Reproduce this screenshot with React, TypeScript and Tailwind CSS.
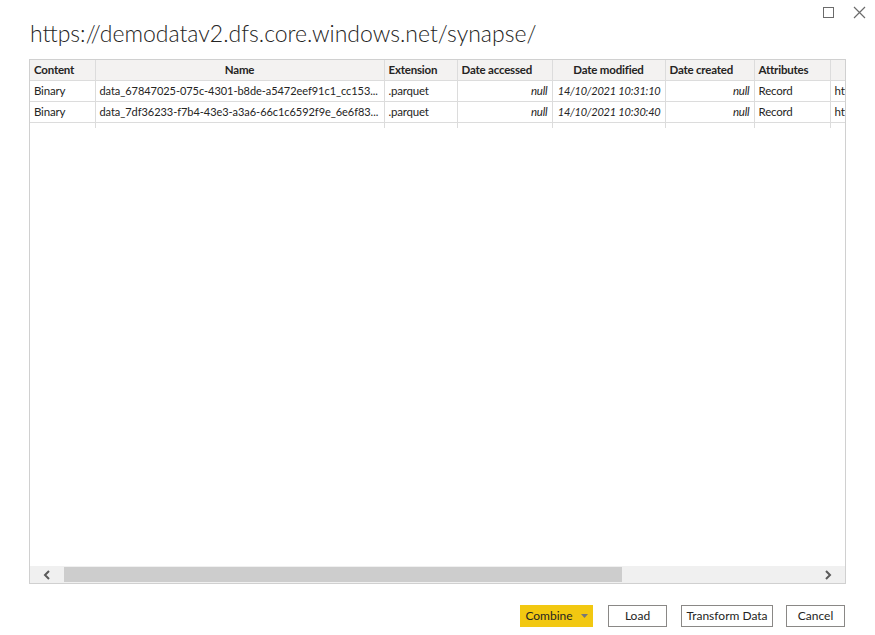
import React from 'react';

const font = { fontFamily: '"Segoe UI", Lato, "Open Sans", sans-serif' };

interface Row {
  content: string;
  name: string;
  extension: string;
  accessed: string;
  modified: string;
  created: string;
  attributes: string;
  path: string;
}

const rows: Row[] = [
  {
    content: 'Binary',
    name: 'data_67847025-075c-4301-b8de-a5472eef91c1_cc153...',
    extension: '.parquet',
    accessed: 'null',
    modified: '14/10/2021 10:31:10',
    created: 'null',
    attributes: 'Record',
    path: 'https://demodatav2.dfs.core.windows.net/synapse/',
  },
  {
    content: 'Binary',
    name: 'data_7df36233-f7b4-43e3-a3a6-66c1c6592f9e_6e6f83...',
    extension: '.parquet',
    accessed: 'null',
    modified: '14/10/2021 10:30:40',
    created: 'null',
    attributes: 'Record',
    path: 'https://demodatav2.dfs.core.windows.net/synapse/',
  },
];

const columns = [
  { label: 'Content', width: 65, align: 'text-left' },
  { label: 'Name', width: 289, align: 'text-center' },
  { label: 'Extension', width: 73, align: 'text-left' },
  { label: 'Date accessed', width: 95, align: 'text-left' },
  { label: 'Date modified', width: 113, align: 'text-center' },
  { label: 'Date created', width: 89, align: 'text-left' },
  { label: 'Attributes', width: 76, align: 'text-left' },
  { label: '', width: 200, align: 'text-left' },
];

const cell = 'px-[4px] border-b border-r border-[#dcdcdc] whitespace-nowrap overflow-hidden';

export default function App() {
  return (
    <div className="relative w-[875px] h-[635px] bg-white text-[#252423] overflow-hidden" style={font}>
      {/* window controls */}
      <div className="absolute top-[6px] right-[9px] flex items-center gap-[19px]">
        <div className="w-[11px] h-[11px] border border-[#6b6b6b]" />
        <svg width="13" height="13" viewBox="0 0 13 13">
          <path d="M1 1 L12 12 M12 1 L1 12" stroke="#6b6b6b" strokeWidth="1.2" />
        </svg>
      </div>

      <div className="flex flex-col pl-[29px] pr-[29px] pt-[17px]">
        <h1 className="text-[23px] leading-[32px] font-light text-[#252423] pl-[1px]">
          https://demodatav2.dfs.core.windows.net/synapse/
        </h1>

        {/* table box */}
        <div className="mt-[10px] w-[817px] h-[525px] border border-[#d0d0d0] flex flex-col">
          <div className="flex-1 overflow-hidden">
            <table
              className="table-fixed border-collapse text-[11.5px] leading-[19px] tracking-[-0.2px]"
              style={{ width: 1000 }}
            >
              <colgroup>
                {columns.map((c, i) => (
                  <col key={i} style={{ width: c.width }} />
                ))}
              </colgroup>
              <thead>
                <tr className="bg-[#f3f2f1] h-[20px]">
                  {columns.map((c, i) => (
                    <th key={i} className={`${c.align} font-bold ${cell}`}>
                      {c.label}
                    </th>
                  ))}
                </tr>
              </thead>
              <tbody>
                {rows.map((r, i) => (
                  <tr key={i} className="h-[21px]">
                    <td className={cell}>{r.content}</td>
                    <td className={`${cell} text-[11px] tracking-[-0.05px]`}>{r.name}</td>
                    <td className={cell}>{r.extension}</td>
                    <td className={`${cell} text-right italic`}>{r.accessed}</td>
                    <td className={`${cell} text-right italic text-[11px]`}>{r.modified}</td>
                    <td className={`${cell} text-right italic`}>{r.created}</td>
                    <td className={cell}>{r.attributes}</td>
                    <td className={cell}>{r.path}</td>
                  </tr>
                ))}
                <tr className="h-[6px]">
                  {columns.map((_, i) => (
                    <td key={i} className="border-r border-[#dcdcdc]" />
                  ))}
                </tr>
              </tbody>
            </table>
          </div>

          {/* horizontal scrollbar */}
          <div className="h-[17px] bg-[#f0f0f0] flex items-center">
            <div className="w-[34px] h-full flex items-center justify-center">
              <svg width="8" height="10" viewBox="0 0 8 10">
                <path d="M6 1 L2 5 L6 9" stroke="#5a5a5a" strokeWidth="2" fill="none" />
              </svg>
            </div>
            <div className="w-[558px] h-[15px] bg-[#cdcdcd]" />
            <div className="flex-1" />
            <div className="w-[34px] h-full flex items-center justify-center">
              <svg width="8" height="10" viewBox="0 0 8 10">
                <path d="M2 1 L6 5 L2 9" stroke="#5a5a5a" strokeWidth="2" fill="none" />
              </svg>
            </div>
          </div>
        </div>

        {/* footer buttons */}
        <div className="mt-[21px] flex justify-end items-center text-[12px] w-[817px] pr-[1px]">
          <button className="w-[73px] h-[22px] bg-[#f2c811] text-[#252423] flex items-center justify-center gap-[8px]">
            <span>Combine</span>
            <svg width="7" height="4" viewBox="0 0 7 4">
              <path d="M0 0 L7 0 L3.5 4 Z" fill="#777" />
            </svg>
          </button>
          <button className="ml-[15px] w-[59px] h-[22px] border border-[#8a8886] bg-white flex items-center justify-center">
            Load
          </button>
          <button className="ml-[14px] w-[92px] h-[22px] border border-[#8a8886] bg-white flex items-center justify-center">
            Transform Data
          </button>
          <button className="ml-[13px] w-[59px] h-[22px] border border-[#8a8886] bg-white flex items-center justify-center">
            Cancel
          </button>
        </div>
      </div>
    </div>
  );
}
